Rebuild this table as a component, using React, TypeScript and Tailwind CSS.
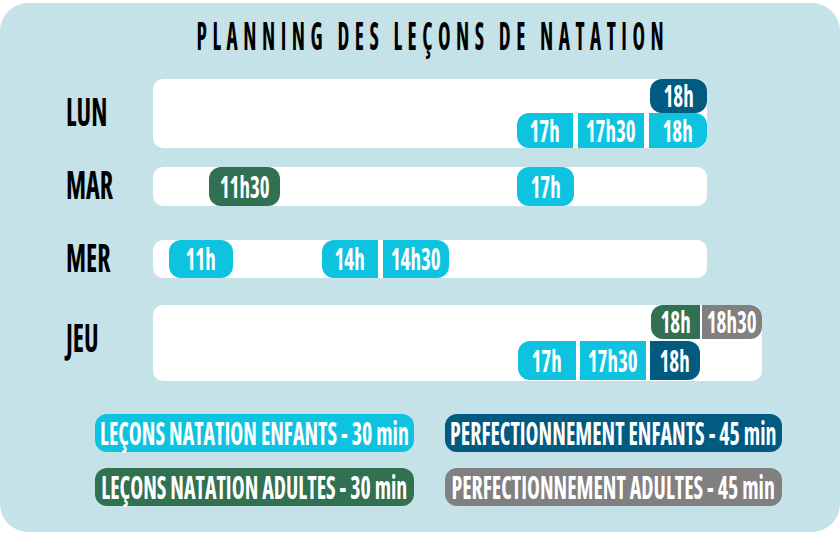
const FONT = "font-['Open_Sans',sans-serif] font-bold [font-stretch:75%]";

type Slot = { text: string; cls: string };

function Pill({ text, cls }: Slot) {
  return (
    <div className={`flex shrink-0 items-center justify-center text-white ${cls}`}>
      <span className="inline-block whitespace-nowrap text-[30px] leading-none scale-x-[0.7]">{text}</span>
    </div>
  );
}

function Day({ label, cls = "-mt-[4px]" }: { label: string; cls?: string }) {
  return (
    <div className={`w-[87px] shrink-0 ${cls}`}>
      <span className="inline-block origin-left whitespace-nowrap text-[40px] leading-none text-black scale-x-[0.65]">
        {label}
      </span>
    </div>
  );
}

function Legend({ text, cls }: Slot) {
  return (
    <div className={`flex h-[38px] shrink-0 items-center justify-center rounded-[12px] text-white ${cls}`}>
      <span className="inline-block whitespace-nowrap text-[32px] leading-none scale-x-[0.685]">{text}</span>
    </div>
  );
}

export default function App() {
  return (
    <div className={`min-h-screen bg-white pt-[3px] ${FONT}`}>
      <div className="h-[529px] w-[840px] rounded-[28px] bg-[#c4e2e7]">
        <div className="box-content flex h-[44px] items-center justify-center pl-[25px] pt-[10px]">
          <span className="inline-block whitespace-nowrap text-[40px] leading-none tracking-[0.26em] text-black scale-x-[0.53]">
            PLANNING DES LEÇONS DE NATATION
          </span>
        </div>

        <div className="mt-[22px] flex items-center pl-[66px]">
          <Day label="LUN" />
          <div className="flex h-[69px] w-[554px] flex-col rounded-[10px] bg-white">
            <div className="flex h-[34px] justify-end">
              <Pill text="18h" cls="w-[57px] rounded-[12px] bg-[#015a80]" />
            </div>
            <div className="flex h-[35px] justify-end gap-[5px]">
              <Pill text="17h" cls="w-[56px] rounded-l-[12px] bg-[#0ec3e0]" />
              <Pill text="17h30" cls="w-[66px] bg-[#0ec3e0]" />
              <Pill text="18h" cls="w-[58px] rounded-r-[12px] bg-[#0ec3e0]" />
            </div>
          </div>
        </div>

        <div className="mt-[19px] flex items-center pl-[66px]">
          <Day label="MAR" cls="-mt-[5px]" />
          <div className="flex h-[39px] w-[554px] rounded-[10px] bg-white">
            <Pill text="11h30" cls="ml-[56px] w-[71px] rounded-[12px] bg-[#327052]" />
            <Pill text="17h" cls="ml-[237px] w-[57px] rounded-[12px] bg-[#0ec3e0]" />
          </div>
        </div>

        <div className="mt-[34px] flex items-center pl-[66px]">
          <Day label="MER" cls="-mt-[4px]" />
          <div className="flex h-[38px] w-[554px] rounded-[10px] bg-white">
            <Pill text="11h" cls="ml-[16px] w-[64px] rounded-[12px] bg-[#0ec3e0]" />
            <Pill text="14h" cls="ml-[89px] w-[56px] rounded-l-[12px] bg-[#0ec3e0]" />
            <Pill text="14h30" cls="ml-[5px] w-[66px] rounded-r-[12px] bg-[#0ec3e0]" />
          </div>
        </div>

        <div className="mt-[27px] flex items-center pl-[66px]">
          <Day label="JEU" cls="-mt-[12px]" />
          <div className="flex h-[76px] w-[609px] flex-col gap-[2px] rounded-[10px] bg-white">
            <div className="flex h-[34px] justify-end gap-[2px]">
              <Pill text="18h" cls="w-[49px] rounded-l-[12px] bg-[#327052]" />
              <Pill text="18h30" cls="w-[60px] rounded-r-[12px] bg-[#808080]" />
            </div>
            <div className="flex h-[39px] justify-end gap-[4px] pr-[62px]">
              <Pill text="17h" cls="w-[58px] rounded-l-[12px] bg-[#0ec3e0]" />
              <Pill text="17h30" cls="w-[66px] bg-[#0ec3e0]" />
              <Pill text="18h" cls="w-[50px] rounded-r-[12px] bg-[#015a80]" />
            </div>
          </div>
        </div>

        <div className="mt-[33px] flex flex-col gap-[16px] pl-[95px]">
          <div className="flex gap-[31px]">
            <Legend text="LEÇONS NATATION ENFANTS - 30 min" cls="w-[319px] bg-[#0ec3e0]" />
            <Legend text="PERFECTIONNEMENT ENFANTS - 45 min" cls="w-[337px] bg-[#015a80]" />
          </div>
          <div className="flex gap-[31px]">
            <Legend text="LEÇONS NATATION ADULTES - 30 min" cls="w-[319px] bg-[#327052]" />
            <Legend text="PERFECTIONNEMENT ADULTES - 45 min" cls="w-[337px] bg-[#808080]" />
          </div>
        </div>
      </div>
    </div>
  );
}
